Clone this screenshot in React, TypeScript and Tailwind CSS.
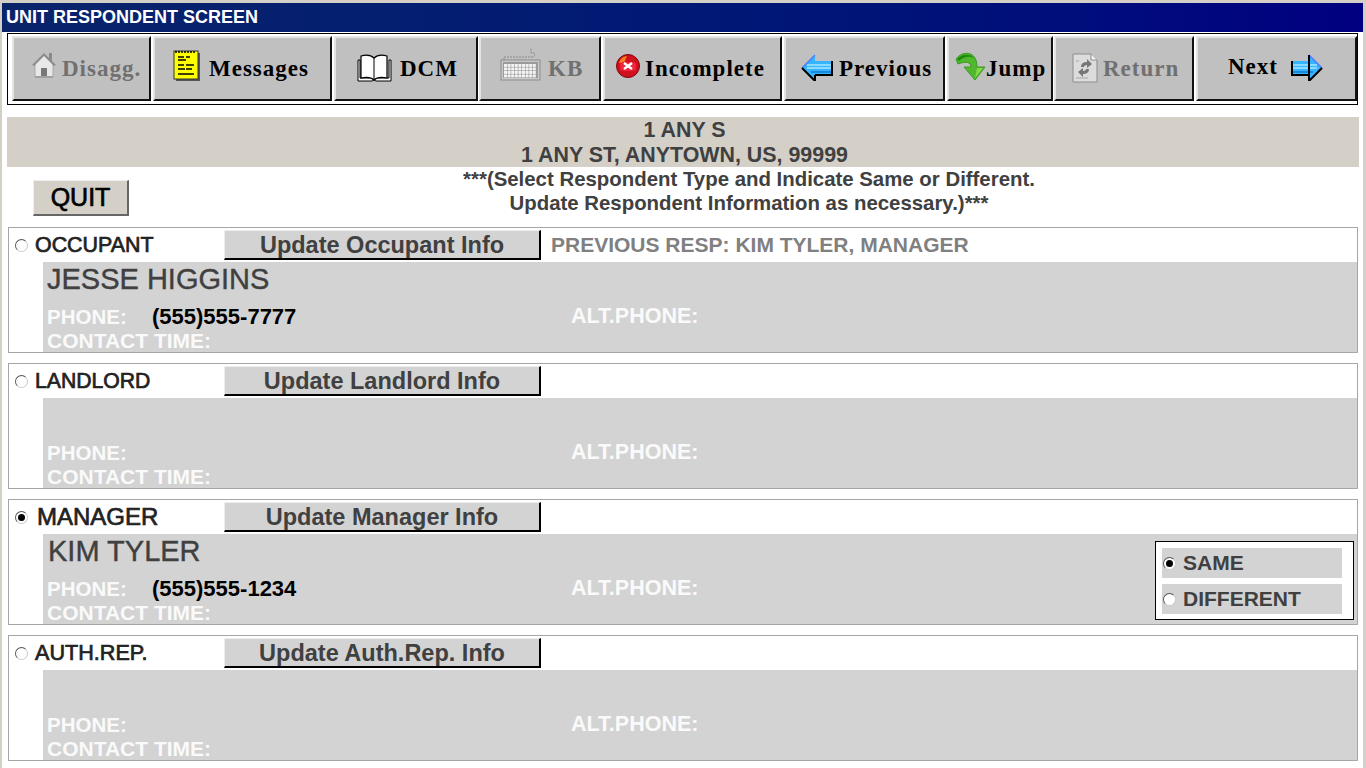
const SANS = "font-['Liberation_Sans',Arial,sans-serif]";

function HouseIcon() {
  return (
    <svg width="26" height="28" viewBox="0 0 26 28" className="shrink-0 -translate-y-[4px]">
      <path d="M18 2h3v9l-3-3z" fill="#8a8a8a" />
      <path d="M4 13v13h18V13L13 4z" fill="#e8e8e8" stroke="#a8a8a8" />
      <path d="M1 14 13 2l12 12-2 1L13 5 3 15z" fill="#8c8c8c" />
      <rect x="10" y="17" width="6" height="9" fill="#777" />
      <rect x="4" y="25" width="18" height="2" fill="#a0a0a0" />
    </svg>
  );
}

function NotepadIcon() {
  return (
    <svg width="28" height="32" viewBox="0 0 28 32" className="shrink-0 -translate-y-[3px]">
      <rect x="3" y="3" width="24" height="28" fill="#555" />
      <rect x="1" y="1" width="24" height="28" fill="#ffff00" stroke="#333" />
      <path d="M3 1v2M6 1v2M9 1v2M12 1v2M15 1v2M18 1v2M21 1v2" stroke="#000" strokeWidth="1.5" />
      <path d="M5 7h6M13 7h4M5 10h8M5 15h6M13 15h8M5 19h7M13 19h6M5 24h16" stroke="#000" strokeWidth="1.6" />
    </svg>
  );
}

function BookIcon() {
  return (
    <svg width="35" height="28" viewBox="0 0 35 28" className="shrink-0 -translate-y-[1px]">
      <path d="M1 6v21h14l2-1 2 1h15V6h-2v18H3V6z" fill="#fff" stroke="#000" />
      <path d="M4 24V2c5-1.500 10-1 13 2 3-3 8-3.500 13-2v22c-5-1-10-1-13 2-3-3-8-3-13-2z" fill="#fff" stroke="#000" strokeWidth="1.2" />
      <path d="M17 4v21" stroke="#000" />
    </svg>
  );
}

function KeyboardIcon() {
  const keys = [];
  for (let r = 0; r < 4; r++) {
    for (let c = 0; c < 9; c++) {
      keys.push(<rect key={`${r}-${c}`} x={4 + c * 3.6} y={19 + r * 3.5} width="3" height="2.9" fill="#f4f4f4" />);
    }
  }
  return (
    <svg width="41" height="36" viewBox="0 0 41 36" className="shrink-0 -translate-y-[6px]">
      <path d="M4 15v-3h28c3 0 3-2 2-4h-3V3" fill="none" stroke="#8a8a8a" strokeDasharray="2 1" />
      <rect x="1" y="15" width="39" height="20" fill="#c8c8c8" stroke="#8c8c8c" />
      <rect x="3" y="17" width="35" height="16" fill="#9a9a9a" />
      {keys}
    </svg>
  );
}

function ErrorIcon() {
  return (
    <svg width="24" height="24" viewBox="0 0 24 24" className="shrink-0 -translate-y-[3px]">
      <circle cx="12" cy="12" r="11.5" fill="#d0101c" stroke="#7a0a10" />
      <path d="M3 9a9 9 0 0 1 8-7l-3 7z" fill="#f08020" />
      <rect x="4" y="8" width="16" height="9" rx="3" fill="#f0243c" />
      <path d="m8 9 8 6M16 9l-8 6" stroke="#fff" strokeWidth="2.4" />
    </svg>
  );
}

function BlueArrow({ flip }: { flip?: boolean }) {
  return (
    <svg width="32" height="27" viewBox="0 0 32 27" className={flip ? "shrink-0 -translate-y-[1px] -scale-x-100" : "shrink-0 -translate-y-[1px]"}>
      <path d="M1 14 14 1v6h17v14H14v6z" fill="#35b4ff" />
      <path d="M14 1 1 14" stroke="#4c7cff" strokeWidth="1.5" />
      <path d="M6 11h25M6 14h25" stroke="#a8e6ff" strokeWidth="1.5" />
      <path d="M10 18h21" stroke="#1a86e0" strokeWidth="2" />
      <path d="M14 21v6L1 14M14 21h17V7" fill="none" stroke="#000" strokeWidth="2" />
      {flip && <path d="M14 1v26" stroke="#000" strokeWidth="2" />}
    </svg>
  );
}

function JumpIcon() {
  return (
    <svg width="31" height="30" viewBox="0 0 31 30" className="shrink-0 -translate-y-[3px]">
      <path d="M1 8c5-7 15-8 19-1 1.500 3 2 5 2 9h8L20 29 9 16h7c0-5-5-6-13-3z" fill="#4fb82c" stroke="#3a9a20" />
      <path d="M2 8c5-5 13-6 17-1-4-2-10-2-15 3z" fill="#1d8a0c" />
      <path d="M22 17h6l-8 10z" fill="#86d84a" />
    </svg>
  );
}

function ReturnIcon() {
  return (
    <svg width="26" height="30" viewBox="0 0 26 30" className="shrink-0 -translate-y-[1px]">
      <path d="M1 1h18l6 6v22H1z" fill="#dcdcdc" stroke="#8c8c8c" />
      <path d="M19 1v6h6" fill="#f4f4f4" stroke="#8c8c8c" />
      <path d="M9 14c0-4 3-5 6-5V6l5 5-5 4v-3c-2 0-3 1-3 2z" fill="#777" />
      <path d="M17 16c0 4-3 5-6 5v3l-5-5 5-4v3c2 0 3-1 3-2z" fill="#777" />
      <path d="M4 8h3M4 25h12" stroke="#a8a8a8" />
    </svg>
  );
}

function ToolButton({ className, textClass, icon, label, after, disabled }: {
  className: string;
  textClass?: string;
  icon?: React.ReactNode;
  label: string;
  after?: React.ReactNode;
  disabled?: boolean;
}) {
  return (
    <div
      className={`flex h-[65px] shrink-0 items-center bg-[#c0c0c0] border-t-2 border-l-2 border-t-[#e4e4e4] border-l-[#e4e4e4] border-r-2 border-b-2 border-r-[#111] border-b-[#111] font-['Liberation_Serif','Times_New_Roman',serif] text-[23px] font-bold tracking-[1px] ${
        disabled ? "text-[#707070]" : "text-black"
      } ${className}`}
    >
      {icon}
      <span className={textClass}>{label}</span>
      {after}
    </div>
  );
}

function Radio({ checked }: { checked?: boolean }) {
  return (
    <span className="flex h-[13px] w-[13px] shrink-0 items-center justify-center rounded-full border border-t-[#555] border-l-[#555] border-r-[#ccc] border-b-[#ccc] bg-white">
      {checked && <span className="h-[7px] w-[7px] rounded-full bg-black" />}
    </span>
  );
}

type Resp = {
  label: string;
  labelClass: string;
  button: string;
  name?: string;
  nameClass?: string;
  phone?: string;
  checked?: boolean;
  note?: string;
  sameBox?: boolean;
};

const RESPONDENTS: Resp[] = [
  { label: "OCCUPANT", labelClass: "ml-[7px] w-[189px] text-[21.4px]", button: "Update Occupant Info", name: "JESSE HIGGINS", nameClass: "ml-[4px]", phone: "(555)555-7777", note: "PREVIOUS RESP: KIM TYLER, MANAGER" },
  { label: "LANDLORD", labelClass: "ml-[7px] w-[189px] text-[21.2px]", button: "Update Landlord Info" },
  { label: "MANAGER", labelClass: "ml-[9px] w-[187px] text-[24px]", button: "Update Manager Info", name: "KIM TYLER", nameClass: "ml-[5px]", phone: "(555)555-1234", checked: true, sameBox: true },
  { label: "AUTH.REP.", labelClass: "ml-[7px] w-[189px] text-[21.6px]", button: "Update Auth.Rep. Info" },
];

function RespondentCard({ r }: { r: Resp }) {
  return (
    <div className="mb-[10px] h-[126px] w-[1350px] border border-[#a6a6a6] bg-white">
      <div className="flex h-[34px] items-center">
        <span className="ml-[6px]"><Radio checked={r.checked} /></span>
        <span className={`shrink-0 text-[#222] [-webkit-text-stroke:0.7px] ${r.labelClass}`}>{r.label}</span>
        <div className="flex h-[30px] w-[317px] shrink-0 items-center justify-center border-r-2 border-b-2 border-r-black border-b-black border-t border-l border-t-[#eee] border-l-[#eee] bg-[#d3d3d3] pt-[2px] text-[23.5px] font-bold text-[#404040]">
          {r.button}
        </div>
        {r.note && <span className="ml-[10px] text-[21px] font-bold text-[#808080]">{r.note}</span>}
      </div>
      <div className="ml-[34px] flex h-[90px] overflow-hidden bg-[#d3d3d3]">
        <div className="flex-1">
          <div className={`flex h-[34px] items-center text-[29px] leading-none text-[#404040] [-webkit-text-stroke:0.4px] ${r.nameClass ?? ""}`}>{r.name}</div>
          <div className="flex h-[33px] items-center pl-[4px] pt-[8px] text-[21px] font-bold leading-[25px] text-[#fafafa]">
            <span className="w-[105px] text-[20.5px]">PHONE:</span>
            <span className="w-[419px] text-[22px] text-black">{r.phone}</span>
            <span className="text-[21.5px]">ALT.PHONE:</span>
          </div>
          <div className="pl-[4px] text-[21px] font-bold leading-[23px] text-[#fafafa]">CONTACT TIME:</div>
        </div>
        {r.sameBox && (
          <div className="mr-[3px] mt-[7px] h-[79px] w-[199px] self-start border border-black bg-white px-[6px] pt-[6px]">
            {["SAME", "DIFFERENT"].map((opt, i) => (
              <div key={opt} className="mb-[6px] flex h-[30px] w-[180px] items-center bg-[#d3d3d3] pl-[1px] text-[21px] font-bold text-[#404040]">
                <Radio checked={i === 0} />
                <span className="ml-[7px]">{opt}</span>
              </div>
            ))}
          </div>
        )}
      </div>
    </div>
  );
}

export default function App() {
  return (
    <div className={`h-[768px] w-[1366px] overflow-hidden border-l-[2px] border-r-[3px] border-t-[3px] border-[#d4d0c8] bg-white ${SANS}`}>
      <div className="flex h-[29px] items-center bg-linear-to-r from-[#0a246a] to-[#000080] pl-[4px] text-[18px] font-bold text-white">
        UNIT RESPONDENT SCREEN
      </div>

      <div className="ml-[5px] mt-[1px] flex h-[72px] w-[1351px] border border-black pl-[4px] pt-[2px]">
        <ToolButton className="mr-[2px] w-[139px] pl-[17px] tracking-[0.7px]" textClass="ml-[5px] mt-[2px]" icon={<HouseIcon />} label="Disagg." disabled />
        <ToolButton className="mr-[2px] w-[179px] pl-[18px]" textClass="ml-[8px] mt-[2px]" icon={<NotepadIcon />} label="Messages" />
        <ToolButton className="mr-[1px] w-[144px] pl-[21px] tracking-[0.5px]" textClass="ml-[8px] mt-[2px]" icon={<BookIcon />} label="DCM" />
        <ToolButton className="mr-[2px] w-[122px] pl-[19px]" textClass="ml-[7px] mt-[2px]" icon={<KeyboardIcon />} label="KB" disabled />
        <ToolButton className="mr-[2px] w-[179px] pl-[11px]" textClass="ml-[5px] mt-[2px]" icon={<ErrorIcon />} label="Incomplete" />
        <ToolButton className="mr-[2px] w-[161px] pl-[15px]" textClass="ml-[6px] mt-[2px]" icon={<BlueArrow />} label="Previous" />
        <ToolButton className="mr-[1px] w-[106px] pl-[6px] tracking-[1.4px]" textClass="mt-[1px]" icon={<JumpIcon />} label="Jump" />
        <ToolButton className="mr-[2px] w-[140px] pl-[16px]" textClass="ml-[5px] mt-[2px]" icon={<ReturnIcon />} label="Return" disabled />
        <ToolButton className="w-[161px] pl-[30px]" textClass="-mt-[3px]" label="Next" after={<span className="ml-[13px]"><BlueArrow flip /></span>} />
      </div>

      <div className="ml-[5px] mt-[12px] h-[50px] w-[1352px] bg-[#d4d0c8] pl-[3px] pt-[1px] text-center text-[21.4px] font-bold leading-[25px] text-[#404040]">
        <div>1 ANY S</div>
        <div>1 ANY ST, ANYTOWN, US, 99999</div>
      </div>

      <div className="flex h-[60px]">
        <div className="ml-[31px] mt-[13px] flex h-[36px] w-[96px] shrink-0 items-center justify-center border-t border-l border-t-[#eee] border-l-[#eee] border-r-2 border-b-2 border-r-[#666] border-b-[#666] bg-[#d4d0c8] text-[25px] text-black [-webkit-text-stroke:0.7px]">
          QUIT
        </div>
        <div className="ml-[301px] w-[638px] text-center text-[20.4px] font-bold leading-[24px] text-[#404040]">
          <div>***(Select Respondent Type and Indicate Same or Different.</div>
          <div>Update Respondent Information as necessary.)***</div>
        </div>
      </div>

      <div className="ml-[6px]">
        {RESPONDENTS.map((r) => (
          <RespondentCard key={r.label} r={r} />
        ))}
      </div>
    </div>
  );
}
